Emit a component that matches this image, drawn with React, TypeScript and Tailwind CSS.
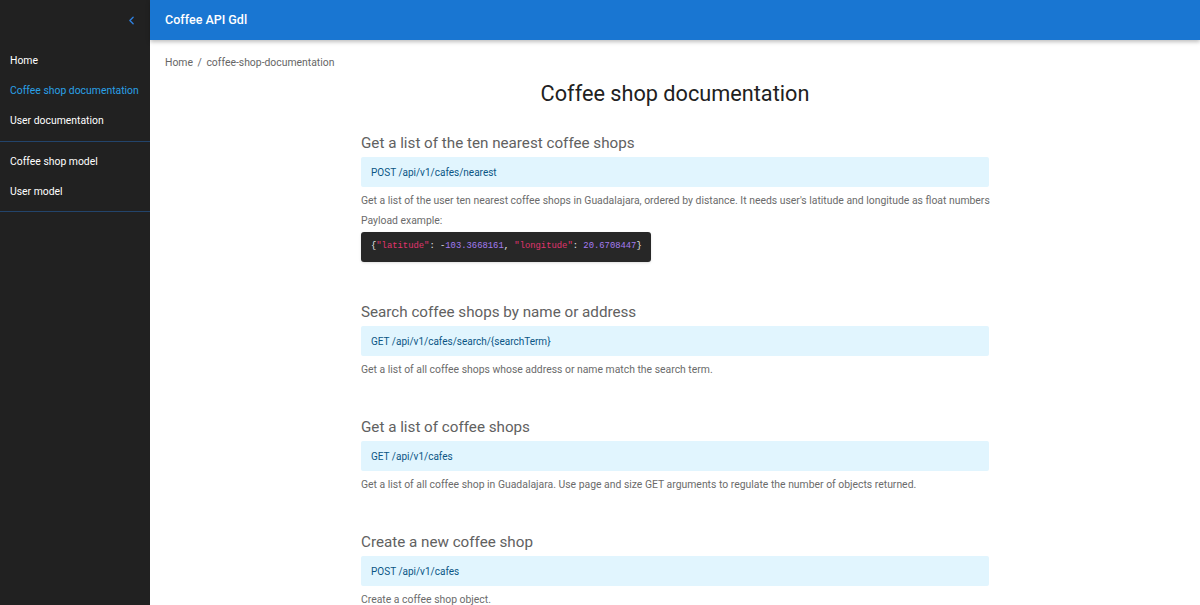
import { ChevronLeft } from 'lucide-react';

const font = { fontFamily: 'Roboto, "Liberation Sans", sans-serif' };

type Endpoint = {
  title: string;
  route: string;
  description: string;
  payload?: boolean;
};

const endpoints: Endpoint[] = [
  {
    title: 'Get a list of the ten nearest coffee shops',
    route: 'POST /api/v1/cafes/nearest',
    description:
      "Get a list of the user ten nearest coffee shops in Guadalajara, ordered by distance. It needs user's latitude and longitude as float numbers",
    payload: true,
  },
  {
    title: 'Search coffee shops by name or address',
    route: 'GET /api/v1/cafes/search/{searchTerm}',
    description: 'Get a list of all coffee shops whose address or name match the search term.',
  },
  {
    title: 'Get a list of coffee shops',
    route: 'GET /api/v1/cafes',
    description:
      'Get a list of all coffee shop in Guadalajara. Use page and size GET arguments to regulate the number of objects returned.',
  },
  {
    title: 'Create a new coffee shop',
    route: 'POST /api/v1/cafes',
    description: 'Create a coffee shop object.',
  },
];

function Sidebar() {
  return (
    <aside className="w-[150px] shrink-0 bg-[#212121] text-[10.4px] text-white">
      <div className="h-10 flex items-center justify-end pr-[12px]">
        <ChevronLeft size={13} strokeWidth={2.5} className="text-[#2f80e0]" />
      </div>
      <nav className="pt-[6px]">
        <div className="h-[30px] flex items-center px-[10px] whitespace-nowrap">Home</div>
        <div className="h-[30px] flex items-center px-[10px] whitespace-nowrap text-[#2aa0e6]">Coffee shop documentation</div>
        <div className="h-[30px] flex items-center px-[10px] whitespace-nowrap">User documentation</div>
      </nav>
      <div className="mt-[5px] h-px bg-[#23446b]" />
      <nav className="pt-[5px]">
        <div className="h-[30px] flex items-center px-[10px] whitespace-nowrap">Coffee shop model</div>
        <div className="h-[30px] flex items-center px-[10px] whitespace-nowrap">User model</div>
      </nav>
      <div className="mt-[4px] h-px bg-[#23446b]" />
    </aside>
  );
}

function Payload() {
  return (
    <div
      className="mt-[1px] w-[290px] h-[30px] rounded-[3px] bg-[#272727] flex items-center px-[10px] text-[8.85px] text-[#e8e8e8] shadow-sm whitespace-pre"
      style={{ fontFamily: '"Liberation Mono", "DejaVu Sans Mono", monospace' }}
    >
      <span>{'{'}</span>
      <span className="text-[#e0346e]">"latitude"</span>
      <span>{': -'}</span>
      <span className="text-[#a37cf0]">103.3668161</span>
      <span>{', '}</span>
      <span className="text-[#e0346e]">"longitude"</span>
      <span>{': '}</span>
      <span className="text-[#a37cf0]">20.6708447</span>
      <span>{'}'}</span>
    </div>
  );
}

function Section({ item }: { item: Endpoint }) {
  return (
    <section className="pb-[37px]">
      <h2 className="text-[15.2px] leading-[20px] text-[#616161] mb-[4px]">{item.title}</h2>
      <div className="h-[30px] rounded-[2px] bg-[#e1f5fe] flex items-center px-[10px] text-[10px] text-[#0b5685]">
        {item.route}
      </div>
      <p className="mt-[4px] text-[10.4px] leading-[20px] text-[#6b6b6b] whitespace-nowrap">{item.description}</p>
      {item.payload && (
        <>
          <p className="text-[10.4px] leading-[20px] text-[#6b6b6b]">Payload example:</p>
          <Payload />
          <div className="h-[3px]" />
        </>
      )}
    </section>
  );
}

export default function App() {
  return (
    <div className="h-[605px] w-full flex overflow-hidden bg-white" style={font}>
      <Sidebar />
      <div className="flex-1 flex flex-col min-w-0">
        <header className="h-10 shrink-0 bg-[#1976d2] flex items-center pl-[15px] text-white text-[12.5px] font-medium shadow-[0_2px_4px_rgba(0,0,0,0.25)] relative z-10">
          Coffee API Gdl
        </header>
        <main className="flex-1 overflow-hidden">
          <div className="px-[15px] pt-[15px] text-[10.4px] leading-[16px] text-[#666]">
            Home <span className="mx-[2px]">/</span> coffee-shop-documentation
          </div>
          <h1 className="mt-[7px] text-center text-[21.7px] leading-[32px] text-[#212121]">Coffee shop documentation</h1>
          <div className="w-[628px] mx-auto mt-[23px]">
            {endpoints.map((item) => (
              <Section key={item.route} item={item} />
            ))}
          </div>
        </main>
      </div>
    </div>
  );
}
